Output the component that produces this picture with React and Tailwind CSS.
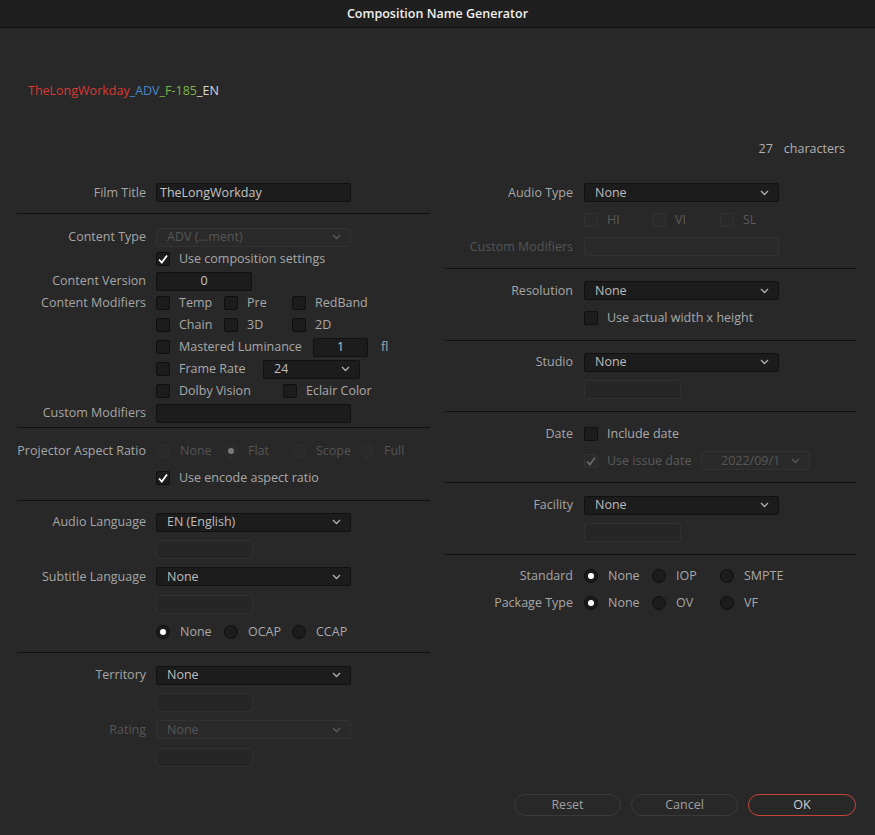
import React from 'react';

const font = { fontFamily: '"Open Sans", "Liberation Sans", sans-serif' };

function Chevron({ dim }) {
    return (
        <svg width="9" height="6" viewBox="0 0 9 6" className="shrink-0">
            <path d="M1 1 L4.5 4.5 L8 1" fill="none" stroke={dim ? '#5a5a5a' : '#b0b0b0'} strokeWidth="1.3" />
        </svg>
    );
}

function Select({ value, w = 'w-[195px]', dim, text = 'pl-[10px]', clip = '' }) {
    return (
        <div
            className={`${w} h-[19px] flex items-center justify-between pr-[9px] ${text} rounded-[2px] border ${
                dim ? 'bg-[#2a2a2a] border-[#323232] text-[#565656]' : 'bg-[#1c1c1c] border-[#111] text-[#bdbdbd]'
            } overflow-hidden whitespace-nowrap`}
        >
            <span className={`overflow-hidden ${clip}`}>{value}</span>
            <Chevron dim={dim} />
        </div>
    );
}

function Input({ value, w = 'w-[195px]', center, dim }) {
    return (
        <div
            className={`${w} h-[19px] flex items-center rounded-[2px] border ${
                dim ? 'bg-[#2a2a2a] border-[#323232]' : 'bg-[#1c1c1c] border-[#111]'
            } text-[#c4c4c4] ${center ? 'justify-center' : 'pl-[3px]'}`}
        >
            {value}
        </div>
    );
}

function SmallBox() {
    return <div className="w-[97px] h-[19px] rounded-[2px] border border-[#303030] bg-[#262626]" />;
}

function Check({ label, checked, dim, w = 'w-[68px]' }) {
    return (
        <div className={`${w} flex items-center shrink-0`}>
            <div
                className={`w-[14px] h-[14px] rounded-[2px] border flex items-center justify-center ${
                    dim ? 'bg-[#2a2a2a] border-[#333]' : 'bg-[#1c1c1c] border-[#0f0f0f]'
                }`}
            >
                {checked && (
                    <svg width="12" height="12" viewBox="0 0 12 12">
                        <path d="M2 6.5 L4.8 9.5 L10 2.5" fill="none" stroke={dim ? '#6a6a6a' : '#fff'} strokeWidth="1.8" />
                    </svg>
                )}
            </div>
            <span className={`ml-[9px] whitespace-nowrap ${dim ? 'text-[#5a5a5a]' : 'text-[#a8a8a8]'}`}>{label}</span>
        </div>
    );
}

function Radio({ label, on, dim, w = 'w-[68px]' }) {
    return (
        <div className={`${w} flex items-center shrink-0`}>
            <div
                className={`w-[14px] h-[14px] rounded-full border flex items-center justify-center ${
                    dim ? 'bg-[#2a2a2a] border-[#303030]' : 'bg-[#1c1c1c] border-[#0f0f0f]'
                }`}
            >
                {on && <div className={`w-[6px] h-[6px] rounded-full ${dim ? 'bg-[#7a7a7a]' : 'bg-white'}`} />}
            </div>
            <span className={`ml-[10px] whitespace-nowrap ${dim ? 'text-[#555]' : 'text-[#a8a8a8]'}`}>{label}</span>
        </div>
    );
}

function LRow({ label, h = 'h-[22px]', dim, children }) {
    return (
        <div className={`flex items-center ${h}`}>
            <div className={`w-[129px] shrink-0 text-right whitespace-nowrap ${dim ? 'text-[#555]' : 'text-[#a6a6a6]'}`}>{label}</div>
            <div className="ml-[10px] flex items-center">{children}</div>
        </div>
    );
}

function RRow({ label, dim, children }) {
    return (
        <div className="flex items-center h-[27px]">
            <div className={`w-[128px] shrink-0 text-right whitespace-nowrap ${dim ? 'text-[#555]' : 'text-[#a6a6a6]'}`}>{label}</div>
            <div className="ml-[11px] flex items-center">{children}</div>
        </div>
    );
}

function Divider({ className = '' }) {
    return <div className={`h-px bg-[#111] ${className}`} />;
}

export default function App() {
    return (
        <div className="w-[875px] h-[835px] bg-[#282828] flex flex-col text-[12.5px] leading-[16px] overflow-hidden" style={font}>
            <div className="h-[28px] shrink-0 bg-[#1f1f1f] border-b border-[#111] flex items-center justify-center">
                <span className="text-[12.5px] font-semibold text-[#f0f0f0]">Composition Name Generator</span>
            </div>

            <div className="mt-[55px] pl-[28px] text-[12.5px]">
                <span className="text-[#d63a36]">TheLongWorkday</span>
                <span className="text-[#4a87cc]">_ADV</span>
                <span className="text-[#7db548]">_F-185</span>
                <span className="text-[#d8d8d8]">_EN</span>
            </div>

            <div className="mt-[42px] flex justify-end pr-[30px] text-[#b0b0b0]">
                <span>27</span>
                <span className="ml-[11px]">characters</span>
            </div>

            <div className="mt-[22px] flex pl-[17px] pr-[19px] gap-[15px]">
                {/* left column */}
                <div className="w-[413px] flex flex-col">
                    <LRow label="Film Title" h="h-[27px]">
                        <Input value="TheLongWorkday" />
                    </LRow>
                    <Divider className="mt-[7px]" />
                    <div className="mt-[12px] flex flex-col">
                        <LRow label="Content Type">
                            <Select value="ADV (...ment)" dim />
                        </LRow>
                        <LRow label="">
                            <Check label="Use composition settings" checked w="w-auto" />
                        </LRow>
                        <LRow label="Content Version">
                            <Input value="0" w="w-[96px]" center />
                        </LRow>
                        <LRow label="Content Modifiers">
                            <Check label="Temp" />
                            <Check label="Pre" />
                            <Check label="RedBand" w="w-auto" />
                        </LRow>
                        <LRow label="">
                            <Check label="Chain" />
                            <Check label="3D" />
                            <Check label="2D" w="w-auto" />
                        </LRow>
                        <LRow label="">
                            <Check label="Mastered Luminance" w="w-[157px]" />
                            <Input value="1" w="w-[55px]" center />
                            <span className="ml-[13px] text-[#a8a8a8]">fl</span>
                        </LRow>
                        <LRow label="">
                            <Check label="Frame Rate" w="w-[107px]" />
                            <Select value="24" w="w-[97px]" />
                        </LRow>
                        <LRow label="">
                            <Check label="Dolby Vision" w="w-[127px]" />
                            <Check label="Eclair Color" w="w-auto" />
                        </LRow>
                        <LRow label="Custom Modifiers">
                            <Input value="" />
                        </LRow>
                    </div>
                    <Divider className="mt-[3px]" />
                    <div className="mt-[9.5px] flex flex-col">
                        <LRow label="Projector Aspect Ratio" h="h-[27px]">
                            <Radio label="None" dim />
                            <Radio label="Flat" on dim />
                            <Radio label="Scope" dim />
                            <Radio label="Full" dim w="w-auto" />
                        </LRow>
                        <LRow label="" h="h-[27px]">
                            <Check label="Use encode aspect ratio" checked w="w-auto" />
                        </LRow>
                    </div>
                    <Divider className="mt-[8px]" />
                    <div className="mt-[8px] flex flex-col">
                        <LRow label="Audio Language" h="h-[27.4px]">
                            <Select value="EN (English)" />
                        </LRow>
                        <LRow label="" h="h-[27.4px]">
                            <SmallBox />
                        </LRow>
                        <LRow label="Subtitle Language" h="h-[27.4px]">
                            <Select value="None" />
                        </LRow>
                        <LRow label="" h="h-[27.4px]">
                            <SmallBox />
                        </LRow>
                        <LRow label="" h="h-[27.4px]">
                            <Radio label="None" on />
                            <Radio label="OCAP" />
                            <Radio label="CCAP" w="w-auto" />
                        </LRow>
                    </div>
                    <Divider className="mt-[7px]" />
                    <div className="mt-[8px] flex flex-col">
                        <LRow label="Territory" h="h-[27.4px]">
                            <Select value="None" />
                        </LRow>
                        <LRow label="" h="h-[27.4px]">
                            <SmallBox />
                        </LRow>
                        <LRow label="Rating" h="h-[27.4px]" dim>
                            <Select value="None" dim />
                        </LRow>
                        <LRow label="" h="h-[27.4px]">
                            <SmallBox />
                        </LRow>
                    </div>
                </div>

                {/* right column */}
                <div className="w-[411px] flex flex-col">
                    <RRow label="Audio Type">
                        <Select value="None" />
                    </RRow>
                    <RRow label="">
                        <Check label="HI" dim />
                        <Check label="VI" dim />
                        <Check label="SL" dim w="w-auto" />
                    </RRow>
                    <RRow label="Custom Modifiers" dim>
                        <Input value="" dim />
                    </RRow>
                    <Divider className="my-[8.2px]" />
                    <RRow label="Resolution">
                        <Select value="None" />
                    </RRow>
                    <RRow label="">
                        <Check label="Use actual width x height" w="w-auto" />
                    </RRow>
                    <Divider className="my-[8.2px]" />
                    <RRow label="Studio">
                        <Select value="None" />
                    </RRow>
                    <RRow label="">
                        <SmallBox />
                    </RRow>
                    <Divider className="my-[8.2px]" />
                    <RRow label="Date">
                        <Check label="Include date" w="w-auto" />
                    </RRow>
                    <RRow label="">
                        <Check label="Use issue date" checked dim w="w-[117px]" />
                        <Select value="2022/09/1" w="w-[109px]" dim text="pl-[19px]" clip="w-[62px]" />
                    </RRow>
                    <Divider className="my-[8.2px]" />
                    <RRow label="Facility">
                        <Select value="None" />
                    </RRow>
                    <RRow label="">
                        <SmallBox />
                    </RRow>
                    <Divider className="my-[8.2px]" />
                    <RRow label="Standard">
                        <Radio label="None" on />
                        <Radio label="IOP" />
                        <Radio label="SMPTE" w="w-auto" />
                    </RRow>
                    <RRow label="Package Type">
                        <Radio label="None" on />
                        <Radio label="OV" />
                        <Radio label="VF" w="w-auto" />
                    </RRow>
                </div>
            </div>

            <div className="mt-auto flex justify-end gap-[10px] pr-[19px] pb-[19px]">
                <button className="w-[107px] h-[22px] rounded-full border border-[#3a3a3a] text-[#a0a0a0] text-[12.5px]">Reset</button>
                <button className="w-[107px] h-[22px] rounded-full border border-[#3a3a3a] text-[#a0a0a0] text-[12.5px]">Cancel</button>
                <button className="w-[108px] h-[22px] rounded-full border border-[#c8453d] text-[#d0d0d0] text-[12.5px]">OK</button>
            </div>
        </div>
    );
}
